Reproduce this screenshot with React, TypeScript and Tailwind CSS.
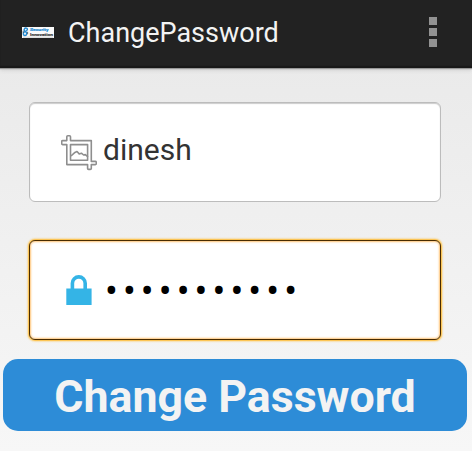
function BrandLogo() {
  return (
    <svg className="h-[11px] w-8 shrink-0" viewBox="0 0 32 11">
      <rect width="32" height="11" fill="#fafafa" />
      <path d="M4.6 1.2C2.5.5 1.2 3 3.2 4.4c2.3 1.5 1.7 4.4-.5 4.1C.7 8.1.9 5.2 3 4.6c2-.6 3.2-2.5 1.6-3.4" fill="none" stroke="#258bd0" strokeWidth="1.4" />
      <path d="M1.2 3.7V6M5.6 4.8v2.4" stroke="#334b60" strokeWidth=".8" />
      <text x="8" y="4" fontSize="4" fontWeight="700" fontFamily="Roboto, sans-serif" fill="#2c8fd4" stroke="#2c8fd4" strokeWidth=".2" textLength="18.5" lengthAdjust="spacingAndGlyphs">Security</text>
      <text x="8" y="8.5" fontSize="4" fontWeight="700" fontFamily="Roboto, sans-serif" fill="#444" stroke="#444" strokeWidth=".2" textLength="23" lengthAdjust="spacingAndGlyphs">Innovation</text>
      <path d="M1 10.2h30" stroke="#aaa" strokeWidth=".5" />
    </svg>
  );
}

function CropPictureIcon() {
  return (
    <svg className="mt-px h-9 w-9 shrink-0" viewBox="0 0 36 36" fill="none" stroke="#8e8e8e" strokeWidth="1.6" strokeLinejoin="round">
      <path d="M5.8 5.6V1.8Q5.8.8 6.8.8h1.7q1 0 1 1v3.8h20.8v20.8h4q1 0 1 1v1.2q0 1-1 1h-4v3.8q0 1-1 1h-1.7q-1 0-1-1v-3.8H5.8V9.6H1.7q-1 0-1-1v-2q0-1 1-1z" />
      <path d="M9.5 9.6h17.1v15.6H9.5z" />
      <path d="m10 21 3.4-3.2 2.6-1.3 2.2 2.4 2.2-.7 2.2 1.8 1.7-.4 2.7 2.2" />
    </svg>
  );
}

function LockIcon() {
  return (
    <svg className="h-[30px] w-[26px] shrink-0" viewBox="0 0 26 30">
      <path d="M6.4 14.5V8.3a6.4 6.4 0 0 1 12.8 0v6.2" fill="none" stroke="#34b4e6" strokeWidth="3.6" />
      <path d="M.3 13.5h25.3V30H.3z" fill="#34b4e6" />
    </svg>
  );
}

export default function App() {
  return (
    <main className="h-[451px] w-[472px] overflow-hidden bg-linear-to-b from-[#e8e8e8] to-[#f7f7f7] font-['Roboto',sans-serif]">
      <header className="flex h-[68px] items-center bg-[#222222] pr-[35px] pb-[4px] pl-[22px] shadow-[inset_0_-2px_1px_#191919,0_1px_1px_#999,0_2px_4px_#ccc]">
        <BrandLogo />
        <h1 className="ml-[14px] pt-[2px] text-[27px] leading-8 whitespace-nowrap text-[#f3f3f3]">ChangePassword</h1>
        <div className="ml-auto flex flex-col gap-[3px]">
          <i className="size-2 bg-[#929292]" />
          <i className="size-2 bg-[#929292]" />
          <i className="size-2 bg-[#929292]" />
        </div>
      </header>
      <section className="px-[29px] pt-[34px]">
        <div className="flex h-[100px] w-[412px] items-center rounded-[6px] border border-[#bcbcbc] bg-white pl-[31px] shadow-[inset_0_1px_1px_#ccc]">
          <CropPictureIcon />
          <span className="ml-[6px] pb-1 text-[30px] leading-9 text-[#333]">dinesh</span>
        </div>
        <div className="mt-[38px] flex h-[100px] w-[412px] items-center rounded-[6px] border border-[#4a2c00] bg-white pl-[36px] shadow-[0_0_2px_1px_#ffb51f,inset_0_0_2px_1px_#ffc477]">
          <LockIcon />
          <span className="ml-[13px] pt-px text-[38px] leading-9 tracking-[5.1px] text-black">•••••••••••</span>
        </div>
      </section>
      <button className="mt-[19px] ml-[3px] flex h-[72px] w-[464px] items-center justify-center rounded-[15px] bg-[#2d8cd7] pt-[4px] text-[44.7px] leading-none font-bold whitespace-nowrap text-[#f3f3f3]">
        Change Password
      </button>
    </main>
  );
}
